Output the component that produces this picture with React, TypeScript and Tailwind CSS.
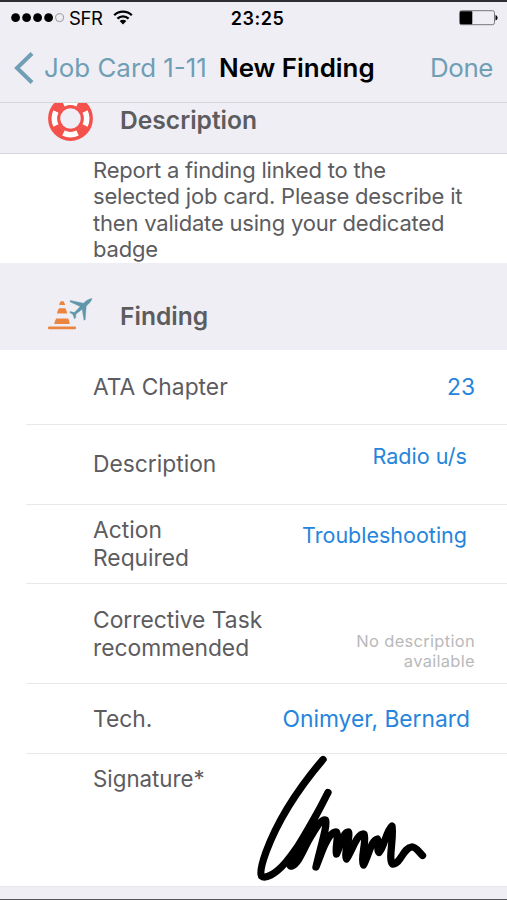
import type { ReactNode } from "react";

function StatusBar() {
  return (
    <div className="grid h-[33px] grid-cols-3 items-center pl-[11px] pr-[9px] text-black">
      <div className="flex items-center">
        <svg className="h-[11px] w-[54px]" viewBox="0 0 54 11">
          <circle cx="4.6" cy="4.7" r="4.4" />
          <circle cx="15.6" cy="4.7" r="4.4" />
          <circle cx="26.6" cy="4.7" r="4.4" />
          <circle cx="37.6" cy="4.7" r="4.4" />
          <circle cx="48.6" cy="4.7" r="4" fill="none" stroke="#8b8b8f" strokeWidth="0.9" />
        </svg>
        <span className="ml-1 text-[18.5px] leading-none tracking-[-0.4px]">SFR</span>
        <svg className="mb-[3px] ml-[10px] h-[15px] w-5" viewBox="0 0 20 15">
          <path d="M1.2 5.2C6 .4 14 .4 18.8 5.2M4.4 8.6c3.2-3.1 8-3.1 11.2 0" fill="none" stroke="#000" strokeWidth="2.3" />
          <path d="M6.7 11c1.9-1.7 4.7-1.7 6.6 0L10 14.4z" />
        </svg>
      </div>
      <span className="pl-[6px] text-center text-[18px] font-semibold leading-none tracking-[0.5px]">23:25</span>
      <svg className="mb-0.5 ml-auto h-4 w-[39px]" viewBox="0 0 39 16">
        <rect x="0.5" y="0.7" width="35" height="14" rx="2" fill="none" stroke="#77777a" />
        <rect x="1" y="1.2" width="12.3" height="13" rx="1" />
        <path d="M36.5 5c2.8.9 2.8 4.7 0 5.6z" />
      </svg>
    </div>
  );
}

function NavBar() {
  return (
    <div className="flex h-[66px] items-center px-[14px] text-[25.9px] leading-none text-[#6f9eb5]">
      <svg className="h-8 w-5" viewBox="0 0 20 32">
        <path d="M18 1.5 3 16l15 14.5" fill="none" stroke="currentColor" strokeWidth="4" />
      </svg>
      <span className="ml-[10px] w-[175px] whitespace-nowrap">Job Card 1-11</span>
      <span className="whitespace-nowrap font-semibold text-black">New Finding</span>
      <span className="ml-auto tracking-[-0.4px]">Done</span>
    </div>
  );
}

function LifeRingIcon() {
  return (
    <svg className="h-[45px] w-[45px]" viewBox="-22.5 -22.5 45 45">
      <circle r="17.9" fill="none" stroke="#f4514c" strokeWidth="9" />
      <circle r="12" fill="none" stroke="#f4514c" strokeWidth="3.4" />
      {/* pale bands between the four straps */}
      <circle
        r="16.2"
        fill="none"
        stroke="#fff"
        strokeWidth="5.6"
        pathLength="360"
        strokeDasharray="52 38"
        strokeDashoffset="26"
      />
    </svg>
  );
}

function ConePlaneIcon() {
  return (
    <svg className="h-[33px] w-[45px]" viewBox="0 0 45 33">
      <g fill="#ec8540">
        <path d="M12.7 3.2h2.8q1.2 1.6 1.6 3.8h-6q.4-2.2 1.6-3.8zM11 10.2h6.4q1.4 2.4 1.8 5.4H9q.4-3 2-5.4zM8.2 20.5h12q1.2 2.4 1.6 5.4H6.2q.6-3 2-5.4z" />
        <rect x="0" y="28.6" width="28" height="2.6" rx="1" />
      </g>
      <path
        d="M44 .6c-3 .3-6 2.2-8.6 4.6L22.4 2.4 22 3.8 32.2 8.6 26.4 14.6 22.2 13.4 21.6 14.3 25 16.6 26.4 20.8 27.5 20.1 28 16 34.2 11.2 36 22.2 37.2 21.7 38.2 8.2C40.8 5.8 43.4 3.4 44 .6z"
        fill="#5f96aa"
        stroke="#5f96aa"
        strokeWidth="0.4"
      />
    </svg>
  );
}

function Signature() {
  return (
    <svg className="h-[131px] w-[180px]" viewBox="250 755 180 131">
      <path
        d="M323 760.5C303 784 279 818 266 853C261 867 260 874 261.500 877C265 880 275 876 286 863C303 843 316 817 328 793.500C316 818 299 845 291 859C288 865 290 868 292 867C299 864 303 851 310 839C316 829 321 820 325.500 821C328 825 320 850 316 868L321 855C325 844 331 832 336.500 833C339 837 335 848 336.500 855C340 848 343 833 348.500 833C351 839 343 854 346.500 860C352 852 357 834 364 835C367 842 360 860 363.500 866C369 856 371 841 377.500 840C380 843 376 851 379 853.500C384 849 386 832 392 827C394 839 388 861 392.500 865C401 865 403 849 411.500 848C416 847.500 419 853.500 422.500 856.500"
        fill="none"
        stroke="#000"
        strokeWidth="7.3"
        strokeLinecap="round"
        strokeLinejoin="round"
      />
    </svg>
  );
}

function Row({ className, children }: { className: string; children: ReactNode }) {
  return (
    <div className={`ml-[26px] flex justify-between border-b border-[#e8e8ea] pl-[67px] ${className}`}>
      {children}
    </div>
  );
}

export default function App() {
  return (
    <div className="flex h-[900px] w-[507px] flex-col overflow-hidden border-b border-[#55555a] bg-white font-['Inter',sans-serif] text-[#5c5c5f]">
      <header className="h-[103px] shrink-0 border-b border-t-2 border-b-[#d6d6da] border-t-[#302d32] bg-[#efeef4]">
        <StatusBar />
        <NavBar />
      </header>

      <div className="flex h-[51px] shrink-0 items-start overflow-hidden border-b border-[#d6d6da] bg-[#efeef4] pl-12">
        <div className="-mt-[7px]">
          <LifeRingIcon />
        </div>
        <h2 className="ml-[27px] mt-[3px] text-[24.6px] font-semibold leading-7">Description</h2>
      </div>
      <p className="h-[109px] shrink-0 pl-[93px] pt-[3px] text-[22px] leading-[26.4px] tracking-[-0.2px]">
        Report a finding linked to the
        <br />
        selected job card. Please describe it
        <br />
        then validate using your dedicated
        <br />
        badge
      </p>

      <div className="flex h-[87px] shrink-0 items-start bg-[#efeef4] pl-12 pt-[35px]">
        <ConePlaneIcon />
        <h2 className="ml-[27px] mt-1 text-[24.6px] font-semibold leading-7">Finding</h2>
      </div>

      <main className="text-[22.8px] leading-7">
        <Row className="h-[75px] items-center pr-8">
          <span>ATA Chapter</span>
          <span className="text-[#2585dc]">23</span>
        </Row>
        <Row className="h-[80px] items-center pr-10">
          <span className="mb-0.5">Description</span>
          <span className="mb-[17px] text-[21.6px] text-[#2585dc]">Radio u/s</span>
        </Row>
        <Row className="h-[79px] items-center pr-10">
          <span>
            Action
            <br />
            Required
          </span>
          <span className="mb-[18px] text-[21.5px] text-[#2585dc]">Troubleshooting</span>
        </Row>
        <Row className="h-[100px] items-start pr-8 pt-[22px]">
          <span>
            Corrective Task
            <br />
            recommended
          </span>
          <span className="mt-[25px] text-right text-[16.5px] leading-5 tracking-[0.3px] text-[#b9b9bb]">
            No description
            <br />
            available
          </span>
        </Row>
        <Row className="h-[70px] items-center pr-[37px]">
          <span>Tech.</span>
          <span className="text-[#2585dc]">Onimyer, Bernard</span>
        </Row>
        <div className="flex h-[132px] items-start pl-[93px]">
          <span className="mt-[11px] w-[157px] text-[22.3px]">Signature*</span>
          <Signature />
        </div>
      </main>

      <div className="grow border-t border-[#e8e8ea] bg-[#efeef4]" />
    </div>
  );
}
